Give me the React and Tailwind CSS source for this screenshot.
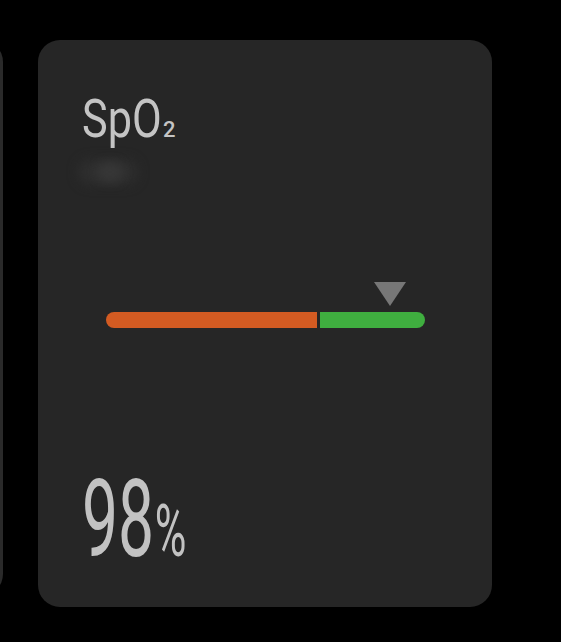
export default function App() {
  const reading = 98;

  return (
    <div
      className="w-[561px] h-[642px] bg-black flex items-start overflow-hidden"
      style={{ fontFamily: "Roboto, 'Noto Sans', sans-serif" }}
    >
      {/* edge of the previous card */}
      <div className="w-[22px] -ml-[19px] h-[556px] mt-[40px] rounded-r-[22px] bg-[#2a2a2a]" />

      <div className="ml-[35px] mt-[40px] w-[454px] h-[567px] rounded-[22px] bg-[#262626] pl-[44px] pt-[52px] flex flex-col">
        {/* title */}
        <div className="h-[54px] flex items-baseline text-[#c4c4c4] leading-none">
          <div className="w-[76px]">
            <span className="inline-block text-[54px] leading-none origin-left scale-x-[0.8] whitespace-nowrap">SpO</span>
          </div>
          <span className="ml-[5px] text-[22px] leading-none font-medium">2</span>
        </div>

        {/* blurred icon placeholder */}
        <div className="mt-[4px] h-[40px] w-[85px] -ml-[17px] relative">
          <div className="absolute left-[14px] top-[10px] w-[58px] h-[24px] rounded-full bg-[#2f2f2f] blur-[6px]" />
          <div className="absolute left-[32px] top-[12px] w-[26px] h-[20px] rounded-full bg-[#363636] blur-[5px]" />
        </div>

        {/* range bar */}
        <div className="ml-[24px] w-[319px] mt-[92px]">
          <div className="pl-[268px] h-[24px]">
            <svg width="32" height="24" viewBox="0 0 32 24">
              <polygon points="0,0 32,0 16,24" fill="#777777" />
            </svg>
          </div>
          <div className="mt-[6px] h-[16px] flex rounded-full overflow-hidden">
            <div className="w-[211px] h-full bg-[#d35b22]" />
            <div className="w-[3px] h-full bg-[#262626]" />
            <div className="flex-1 h-full bg-[#3fae3f]" />
          </div>
        </div>

        {/* value */}
        <div className="mt-[138px] flex items-baseline text-[#c2c2c2] font-normal leading-none origin-left scale-x-[0.6]">
          <span className="text-[107px] leading-none">{reading}</span>
          <span className="text-[72px] leading-none ml-[1px]">%</span>
        </div>
      </div>
    </div>
  );
}
